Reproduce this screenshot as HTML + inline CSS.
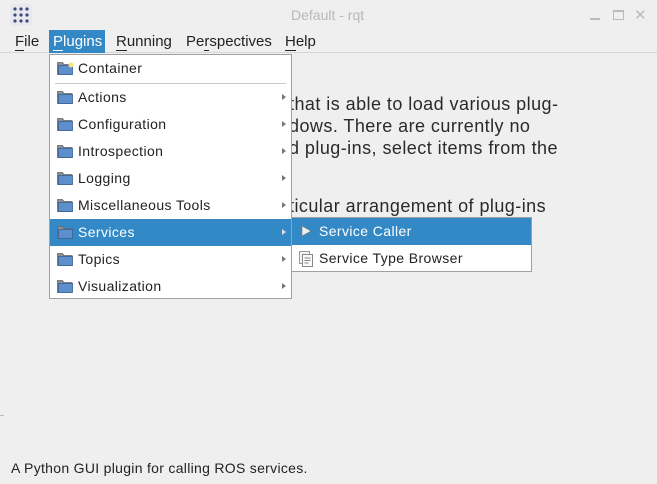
<!DOCTYPE html><html><head><style>
body{margin:0;width:657px;height:484px;background:#efefef;font-family:"Liberation Sans",sans-serif;position:relative;overflow:hidden;font-size:14px;color:#222}
.a{position:absolute;white-space:nowrap}
.bg{font-size:18px;color:#2a2a2a;letter-spacing:0.45px}
.menu{position:absolute;left:49px;top:54px;width:241px;height:243px;background:#fff;border:1px solid #a0a0a0}
.it{position:absolute;left:0;width:241px;height:27px;line-height:27px;letter-spacing:0.4px}
.it span{position:absolute;left:28px}
.it svg.f{position:absolute;left:7px;top:6px}
.ar{position:absolute;right:5px;top:10px;width:0;height:0;border-left:4px solid #777;border-top:3.5px solid transparent;border-bottom:3.5px solid transparent}
.hl{background:#3289c6;color:#fff}
.hl .ar{border-left-color:#ddd}
u{text-decoration:none;border-bottom:1px solid #222}
</style></head><body>
<svg class="a" style="left:10px;top:4px" width="22" height="22"><rect x="0" y="0" width="22" height="22" rx="4" fill="#e8e8ee"/><g fill="#3a4a7a"><circle cx="5" cy="5" r="1.6"/><circle cx="11" cy="5" r="1.6"/><circle cx="17" cy="5" r="1.6"/><circle cx="5" cy="11" r="1.6"/><circle cx="11" cy="11" r="1.6"/><circle cx="17" cy="11" r="1.6"/><circle cx="5" cy="17" r="1.6"/><circle cx="17" cy="17" r="1.6"/><circle cx="11" cy="17" r="1.6"/></g></svg>
<div class="a" style="left:291px;top:7px;color:#b8b8b8;font-size:14px">Default - rqt</div>
<div class="a" style="left:590px;top:18px;width:10px;height:2px;background:#bbb"></div>
<div class="a" style="left:613px;top:10px;width:9px;height:7px;border:1px solid #bbb;border-top-width:2px"></div>
<div class="a" style="left:634px;top:6px;color:#bbb;font-size:15px">✕</div>
<div class="a" style="left:0;top:52px;width:657px;height:1px;background:#d6d6d6"></div>
<div class="a" style="left:15px;top:33px;font-size:15px"><u>F</u>ile</div>
<div class="a" style="left:49px;top:30px;width:56px;height:23px;background:#3289c6"></div>
<div class="a" style="left:53px;top:33px;font-size:15px;color:#fff"><u style="border-color:#fff">P</u>lugins</div>
<div class="a" style="left:116px;top:33px;font-size:15px"><u>R</u>unning</div>
<div class="a" style="left:186px;top:33px;font-size:15px">Pe<u>r</u>spectives</div>
<div class="a" style="left:285px;top:33px;font-size:15px"><u>H</u>elp</div>
<div class="a bg" style="left:289px;top:94px">that is able to load various plug-</div>
<div class="a bg" style="left:289px;top:116px">dows. There are currently no</div>
<div class="a bg" style="left:289px;top:138px">d plug-ins, select items from the</div>
<div class="a bg" style="left:289px;top:196px">ticular arrangement of plug-ins</div>
<div class="a" style="left:0;top:415px;width:4px;height:1px;background:#bbb"></div>
<div class="a" style="left:11px;top:460px;font-size:14px;letter-spacing:0.3px">A Python GUI plugin for calling ROS services.</div>
<svg width="0" height="0" style="position:absolute"><defs><g id="fd"><path d="M0.5 1.5h5l1.5 2h8v10h-14.5z" fill="#8a8f98" stroke="#666" stroke-width="0.8"/><rect x="1.5" y="4.5" width="14" height="9" fill="#5d8fcc" stroke="#3c5f91" stroke-width="0.8"/></g></defs></svg>
<div class="menu">
<div class="it" style="top:0"><svg class="f" width="17" height="15"><use href="#fd"/><circle cx="14" cy="4" r="2.5" fill="#f4e27a"/></svg><span>Container</span></div>
<div style="position:absolute;left:5px;top:28px;width:231px;height:1px;background:#c8c8c8"></div>
<div class="it" style="top:29px"><svg class="f" width="17" height="15"><use href="#fd"/></svg><span>Actions</span><i class="ar"></i></div>
<div class="it" style="top:56px"><svg class="f" width="17" height="15"><use href="#fd"/></svg><span>Configuration</span><i class="ar"></i></div>
<div class="it" style="top:83px"><svg class="f" width="17" height="15"><use href="#fd"/></svg><span>Introspection</span><i class="ar"></i></div>
<div class="it" style="top:110px"><svg class="f" width="17" height="15"><use href="#fd"/></svg><span>Logging</span><i class="ar"></i></div>
<div class="it" style="top:137px"><svg class="f" width="17" height="15"><use href="#fd"/></svg><span>Miscellaneous Tools</span><i class="ar"></i></div>
<div class="it hl" style="top:164px"><svg class="f" width="17" height="15"><use href="#fd"/></svg><span>Services</span><i class="ar"></i></div>
<div class="it" style="top:191px"><svg class="f" width="17" height="15"><use href="#fd"/></svg><span>Topics</span><i class="ar"></i></div>
<div class="it" style="top:218px"><svg class="f" width="17" height="15"><use href="#fd"/></svg><span>Visualization</span><i class="ar"></i></div>
</div>
<div class="a" style="left:291px;top:217px;width:239px;height:53px;background:#fff;border:1px solid #a0a0a0"></div>
<div class="a hl" style="left:292px;top:218px;width:239px;height:27px"></div>
<svg class="a" style="left:300px;top:225px" width="12" height="12"><path d="M2 1l9 5-9 5z" fill="#eee" stroke="#777" stroke-width="0.6"/></svg>
<div class="a" style="left:319px;top:223px;color:#fff;letter-spacing:0.4px">Service Caller</div>
<svg class="a" style="left:299px;top:251px" width="15" height="16"><rect x="0.5" y="0.5" width="10" height="12" fill="#f4f4f4" stroke="#999"/><rect x="3.5" y="3.5" width="10" height="12" fill="#fafafa" stroke="#888"/><path d="M5.5 7h6M5.5 9.5h6M5.5 12h4" stroke="#888"/></svg>
<div class="a" style="left:319px;top:250px;letter-spacing:0.4px">Service Type Browser</div>
</body></html>
